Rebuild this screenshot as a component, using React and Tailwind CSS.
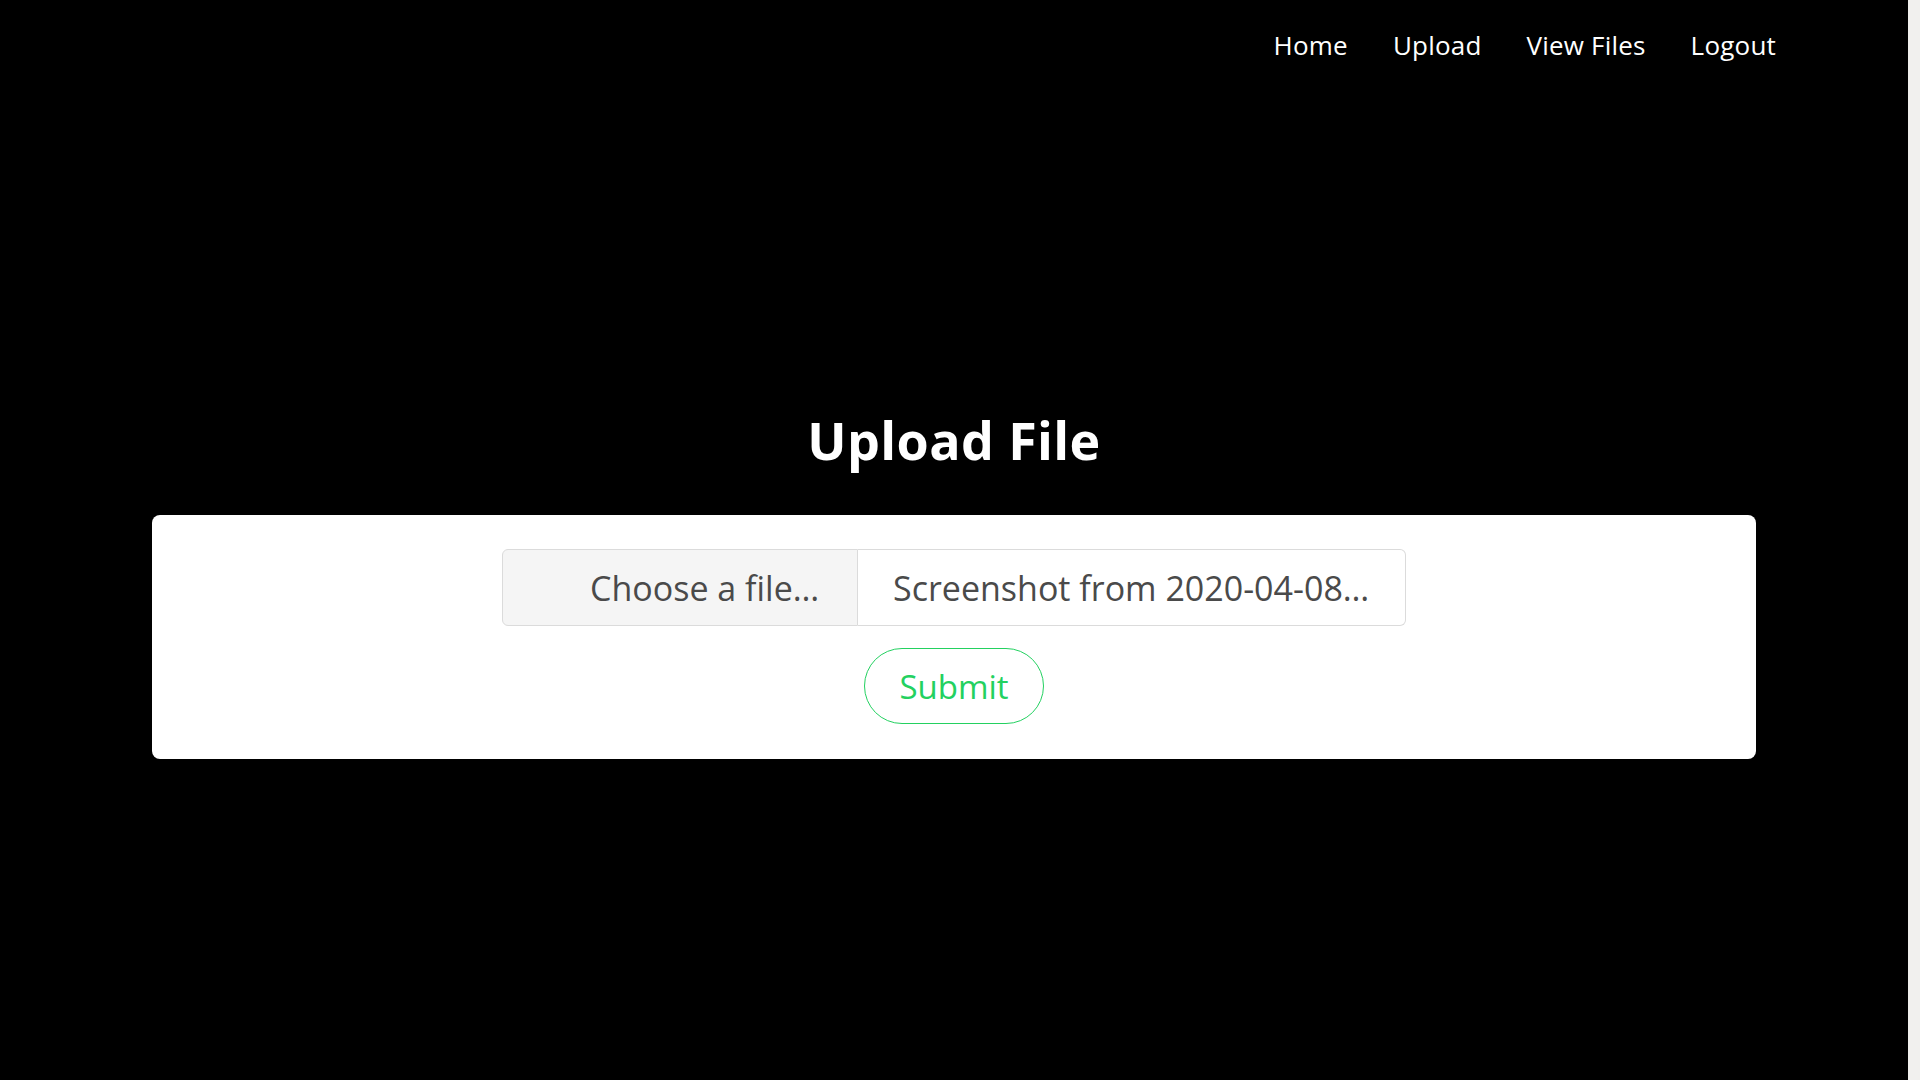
export default function App() {
  const links = ['Home', 'Upload', 'View Files', 'Logout'];

  return (
    <div className="flex min-h-screen bg-black font-['Open_Sans',sans-serif]">
      <div className="flex-1 flex flex-col">
        <nav className="flex justify-end gap-[45px] pt-[32px] pr-[132px]">
          {links.map((l) => (
            <a key={l} href="#" className="text-[26px] leading-none tracking-[0.2px] text-white">
              {l}
            </a>
          ))}
        </nav>

        <h1 className="mt-[356px] text-center text-[52px] font-bold leading-none tracking-[0.4px] text-white">
          Upload File
        </h1>

        <div className="mx-[152px] mt-[49px] flex flex-col items-center rounded-[8px] bg-white pt-[34px] pb-[35px]">
          <label className="flex h-[77px] w-[904px] cursor-pointer">
            <input type="file" className="hidden" />
            <span className="flex w-[356px] items-center rounded-l-[6px] border border-[#dbdbdb] bg-[#f5f5f5] pl-[87px] text-[34px] leading-none text-[#4a4a4a]">
              Choose a file…
            </span>
            <span className="flex flex-1 items-center whitespace-nowrap rounded-r-[6px] border border-l-0 border-[#dbdbdb] bg-white pl-[35px] text-[34px] leading-none text-[#4a4a4a]">
              Screenshot from 2020-04-08…
            </span>
          </label>

          <button className="mt-[22px] flex h-[76px] w-[180px] items-center justify-center rounded-full border border-[#23d160] bg-white text-[33px] leading-none text-[#23d160]">
            Submit
          </button>
        </div>
      </div>
      <div className="w-[12px] bg-[#f1f0ee]" />
    </div>
  );
}
